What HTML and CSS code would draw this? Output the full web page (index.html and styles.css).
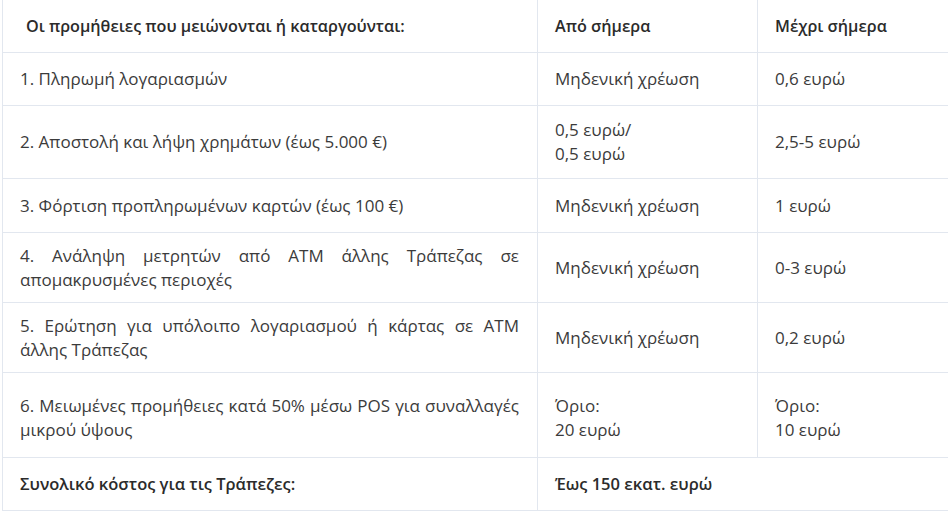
FILE: index.html
```html
<!DOCTYPE html>
<html lang="el">
<head>
<meta charset="utf-8">
<title>Προμήθειες</title>
<link rel="stylesheet" href="styles.css">
</head>
<body>
<table class="fees">
  <colgroup>
    <col class="c1">
    <col class="c2">
    <col class="c3">
  </colgroup>
  <thead>
    <tr class="rh">
      <th class="first">Οι προμήθειες που μειώνονται ή καταργούνται:</th>
      <th>Από σήμερα</th>
      <th>Μέχρι σήμερα</th>
    </tr>
  </thead>
  <tbody>
    <tr class="r1">
      <td class="desc">1. Πληρωμή λογαριασμών</td>
      <td>Μηδενική χρέωση</td>
      <td>0,6 ευρώ</td>
    </tr>
    <tr class="r2">
      <td class="desc">2. Αποστολή και λήψη χρημάτων (έως 5.000 €)</td>
      <td>0,5 ευρώ/<br>0,5 ευρώ</td>
      <td>2,5-5 ευρώ</td>
    </tr>
    <tr class="r3">
      <td class="desc">3. Φόρτιση προπληρωμένων καρτών (έως 100 €)</td>
      <td>Μηδενική χρέωση</td>
      <td>1 ευρώ</td>
    </tr>
    <tr class="r4">
      <td class="desc">4. Ανάληψη μετρητών από ATM άλλης Τράπεζας σε απομακρυσμένες περιοχές</td>
      <td>Μηδενική χρέωση</td>
      <td>0-3 ευρώ</td>
    </tr>
    <tr class="r5">
      <td class="desc">5. Ερώτηση για υπόλοιπο λογαριασμού ή κάρτας σε ATM άλλης Τράπεζας</td>
      <td>Μηδενική χρέωση</td>
      <td>0,2 ευρώ</td>
    </tr>
    <tr class="r6">
      <td class="desc">6. Μειωμένες προμήθειες κατά 50% μέσω POS για συναλλαγές μικρού ύψους</td>
      <td>Όριο:<br>20 ευρώ</td>
      <td>Όριο:<br>10 ευρώ</td>
    </tr>
    <tr class="rt">
      <td class="desc strong">Συνολικό κόστος για τις Τράπεζες:</td>
      <td class="strong" colspan="2">Έως 150 εκατ. ευρώ</td>
    </tr>
  </tbody>
</table>
</body>
</html>
```

FILE: styles.css
```css
html, body {
  margin: 0;
  padding: 0;
  background: #ffffff;
}

body {
  font-family: "Open Sans", "Noto Sans", sans-serif;
  color: #3b3b3b;
  font-size: 17px;
  line-height: 24px;
}

.fees {
  border-collapse: collapse;
  table-layout: fixed;
  width: 946px;
  margin: -1px 0 0 2px;
}

.c1 { width: 535px; }
.c2 { width: 220px; }
.c3 { width: 191px; }

.fees th,
.fees td {
  border: 1px solid #e2e7ef;
  padding: 0 18px 0 17px;
  vertical-align: middle;
  text-align: left;
}

.fees th {
  font-weight: 600;
  font-size: 16.2px;
  color: #2b2b2b;
}

.fees th.first {
  padding-left: 23px;
}

.fees td.desc {
  text-align: justify;
}

.fees td.strong {
  font-weight: 600;
  font-size: 16.5px;
  color: #2b2b2b;
}

.rh { height: 53px; }
.r1 { height: 53px; }
.r2 { height: 73px; }
.r3 { height: 54px; }
.r4 { height: 70px; }
.r5 { height: 70px; }
.r6 { height: 85px; }
.r6 td { padding-top: 5px; }
.rt { height: 53px; }
```
